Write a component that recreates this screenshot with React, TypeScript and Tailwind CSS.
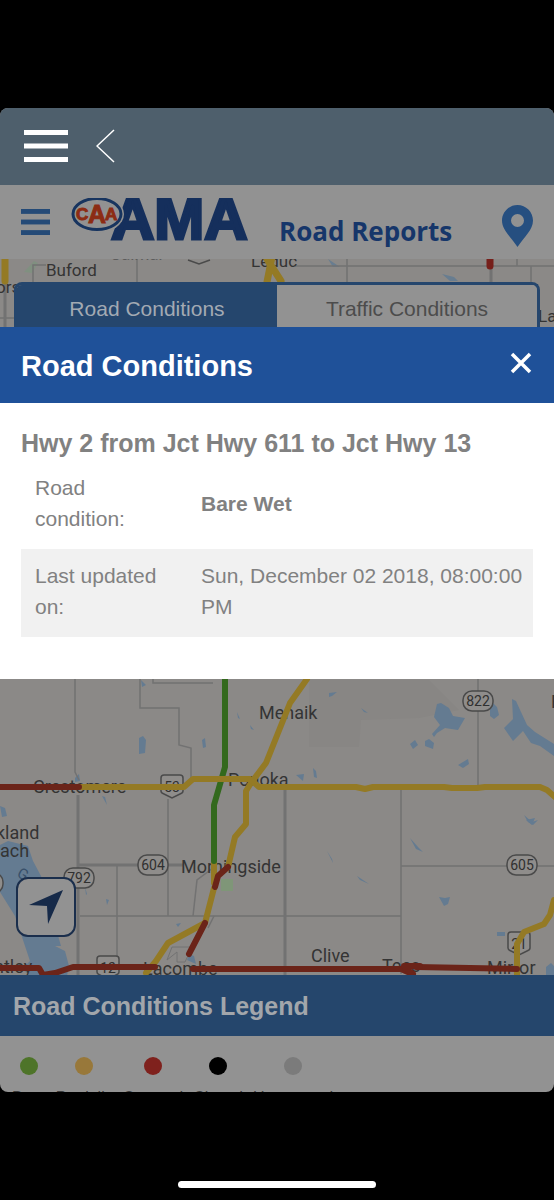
import { ReactNode } from "react";

type LegendItem = { label: string; color: string };

const legend: LegendItem[] = [
  { label: "Bare", color: "bg-[#4e7429]" },
  { label: "Partially", color: "bg-[#98783a]" },
  { label: "Covered", color: "bg-[#7f211d]" },
  { label: "Closed", color: "bg-black" },
  { label: "Unreported", color: "bg-[#7b7b7b]" },
];

function Bars({ className, thickness }: { className: string; thickness: number }) {
  return (
    <svg viewBox="0 0 44 32" preserveAspectRatio="none" className={className} fill="currentColor" aria-hidden="true">
      <rect width="44" height={thickness} />
      <rect y={16 - thickness / 2} width="44" height={thickness} />
      <rect y={32 - thickness} width="44" height={thickness} />
    </svg>
  );
}

function Logo() {
  return (
    <svg viewBox="0 0 184 48" className="h-12 w-[184px] shrink-0" role="img" aria-label="CAA AMA">
      <text
        x="40"
        y="41"
        fontFamily="Liberation Sans, Arial, sans-serif"
        fontWeight="700"
        fontSize="60"
        fill="#152f5c"
        stroke="#152f5c"
        strokeWidth="3"
      >
        AMA
      </text>
      <ellipse cx="26" cy="16" rx="27" ry="19" fill="#929292" />
      <ellipse cx="26" cy="16" rx="24" ry="15.500" fill="#929292" stroke="#17345f" strokeWidth="3" />
      <g fontFamily="Liberation Sans, Arial, sans-serif" fontWeight="700" fill="#8c2c14" stroke="#8c2c14" strokeWidth="1">
        <text x="5" y="22" fontSize="17">C</text>
        <text x="17" y="25" fontSize="25">A</text>
        <text x="34" y="22" fontSize="17">A</text>
      </g>
    </svg>
  );
}

// Oval secondary highway marker
function Oval({ x, y, children }: { x: number; y: number; children: ReactNode }) {
  return (
    <g>
      <rect x={x - 15} y={y - 10} width="30" height="20" rx="9" fill="#8f8d8b" stroke="#4a4a4a" strokeWidth="1.500" />
      <text x={x} y={y + 5} fontSize="14" textAnchor="middle" fill="#303030">{children}</text>
    </g>
  );
}

// Primary highway marker
function Shield({ x, y, children }: { x: number; y: number; children: ReactNode }) {
  return (
    <g>
      <path
        d={`M${x - 11} ${y - 8}q0-3 3-3h16q3 0 3 3v13q0 2-3 3l-8 4-8-4q-3-1-3-3z`}
        fill="#8f8d8b"
        stroke="#4a4a4a"
        strokeWidth="1.500"
      />
      <text x={x} y={y + 6} fontSize="14" textAnchor="middle" fill="#303030">{children}</text>
    </g>
  );
}

function RoadMap() {
  return (
    <svg
      viewBox="0 259 554 716"
      preserveAspectRatio="xMidYMin slice"
      className="absolute inset-0 h-full w-full"
      fontFamily="Roboto, sans-serif"
      role="img"
      aria-label="Map of road conditions"
    >
      <rect y="259" width="554" height="716" fill="#8b8987" />
      <path d="M309 680h120l30 30-40 8-58 2-2 27h-50z" fill="#888684" />
      <path d="M221 879h12v12h-12z" fill="#7f9678" />

      {/* Lakes */}
      <g fill="#647b91">
        <path d="M0 845l8-4 20 5 5 15 8 15 20 70-6 0 10 5 4 15-3 15-8 12H45l-8-12-15-12 8-8-15-45L0 892z" />
        <path d="M139 738l4-2 3 4-1 13-6 1zM0 806l5 2 2 8-5 1zM75 778l4-4 1 7-5 1zM102 796l3 1 2 8zM202 740l3-2 1 9-3 1zM141 680l5 5-4 2z" />
        <path d="M329 693l8-1-5 4-3 1zM361 708l7 5-4-1zM296 775l8-1-1 7zM313 768l3 3 1 7-3-1zM237 712l3 7-2-1zM250 725l4 5-3-1z" />
        <path d="M437 704l4-1 8 5 4 8 12 2-7 12-13-2-8 5-3 4-2-3 8-9-6-8zM490 710l2-8 5 5 2 8-5 4-4-3z" />
        <path d="M512 699l4 2 5 11 6 13 8 7 19 12v12l-14-10-9-3-8-12-10 10-9-13 9-9zM410 744l5-4 3 5-5 4zM425 741l4-2 5 4-1 6-8-3zM458 765l10-6 1 5-6 4zM524 815l8 7 6-2-5 5-5-3z" />
        <path d="M410 838l8 9 5 5-7-3zM439 897l6 1 5-1-2 7-4 2zM497 932h8v4h-8zM546 967l5-4 3 3v9h-8zM526 820l9-2-3 7zM327 851l5 8 1 4zM357 876l12 8-9-4zM85 887l2 7-1 1zM106 899l3 1-2 5zM176 924l5-1-3 4zM189 954l5 2 2 8-9-4z" />
      </g>
      <path d="M24 272l10-11 4 2-6 10z" fill="#809080" />
      <path d="M328 259l12 8h-7zM351 271l7 7zM442 274l12 3 4 4h-8z" fill="#687d90" />

      {/* Local roads */}
      <g fill="none" stroke="#727272" strokeWidth="1.500">
        <path d="M75 679v93l4 8M140 679v29h39v37l12 3v31M153 679v4h60M168 799v117M80 916h321M117 865v108M33 282v-17h13M137 259v23M347 259v23M295 266h259M517 259v7M531 266v16M0 318h14" />
        <path d="M478 679v107M401 790v184M401 866h153M193 916l4-36 20-15M208 928l6-12" />
        <path d="M78 795v180M78 865h62M168 865h15M285 790v185" strokeWidth="3" />
        <path d="M5 281v46M491 267v15" strokeWidth="3" />
        <path d="M167 960l10-8v10h8l7-15h-20z" strokeWidth="1" />
      </g>

      {/* Town names */}
      <g fill="#343434" fontSize="18">
        <text x="46" y="276" fontSize="17">Buford</text>
        <text x="110" y="260" fontSize="17" fill="#5c5c5c">Calmar</text>
        <text x="251" y="267" fontSize="17">Leduc</text>
        <text x="-4" y="293" fontSize="17">ors</text>
        <text x="538" y="322" fontSize="17">La</text>
        <text x="259" y="719">Menaik</text>
        <text x="228" y="786">Ponoka</text>
        <text x="33" y="793">Crestomere</text>
        <text x="-4" y="839">kland</text>
        <text x="0" y="857">ach</text>
        <text x="181" y="873">Morningside</text>
        <text x="311" y="962">Clive</text>
        <text x="382" y="972">Tees</text>
        <text x="487" y="974">Mirror</text>
        <text x="143" y="975">Lacombe</text>
        <text x="-6" y="973">ntley</text>
        <text x="551" y="708">R</text>
        <text x="16" y="876" fontSize="15" fill="#38506a" transform="rotate(30 16 876)">G</text>
        <text x="-1" y="676" fontSize="17">g</text>
      </g>

      <path d="M188 260l11 4 11-4" fill="none" stroke="#4a4a4a" strokeWidth="1.500" />
      <Oval x={478} y={701}>822</Oval>
      <Oval x={153} y={865}>604</Oval>
      <Oval x={522} y={865}>605</Oval>
      <Oval x={79} y={878}>792</Oval>
      <rect x="-27" y="873" width="30" height="20" rx="9" fill="#8f8d8b" stroke="#4a4a4a" strokeWidth="1.500" />
      <Shield x={172} y={786}>53</Shield>
      <Shield x={108} y={967}>12</Shield>
      <Shield x={519} y={943}>21</Shield>

      {/* Reported conditions */}
      <g fill="none" strokeWidth="6" strokeLinecap="round" strokeLinejoin="round">
        <path d="M214 863v20" stroke="#947a25" />
        <path d="M225 679v88l-11 38v56" stroke="#33691d" />
        <g stroke="#947a25">
          <path d="M307 679l-17 24-24 60-15 20-5 8v33l-11 13-7 30M214 888l-9 35-37 20-12 18-10 12" />
          <path d="M80 787h104l9-8h57l9 8h97l9 2 8-2h71l8 1h25l8-1h55l7 3 8 7M554 900l-4 15-6 9-20 8-7 12v31" />
          <path d="M5 257v24M272 257l-5 25M267 259l14 22" strokeWidth="7" />
        </g>
        <g stroke="#6b2419">
          <path d="M0 787h79M228 867l-10 9-3 11M205 923l-16 31" />
          <path d="M0 968h39l4 7M43 975l12-2 18-6h82M193 969h208l9 4M416 967l101 2" />
          <path d="M404 966h16M405 968l8 6" />
        </g>
        <path d="M490 257v9" stroke="#761f1a" strokeWidth="7" />
      </g>
    </svg>
  );
}

function ConditionsPanel() {
  return (
    <section className="bg-white text-[#818181]" role="dialog" aria-labelledby="panel-title">
      <div className="flex h-[76px] items-center justify-between bg-[#1f5199] px-[21px] text-white">
        <h2 id="panel-title" className="pt-1 text-[29px] font-bold">Road Conditions</h2>
        <button type="button" aria-label="Close" className="mb-1">
          <svg viewBox="0 0 24 24" className="h-6 w-6" fill="none" stroke="currentColor" strokeWidth="3.500">
            <path d="M3 3l18 18M21 3L3 21" />
          </svg>
        </button>
      </div>
      <div className="px-[21px] pt-[22px] pb-[42px]">
        <h3 className="text-[25px] leading-9 font-bold">Hwy 2 from Jct Hwy 611 to Jct Hwy 13</h3>
        <table className="w-full text-left text-[21px] leading-[31px]">
          <tbody>
            <tr>
              <th scope="row" className="w-[166px] px-[14px] pt-[11px] pb-[15px] font-normal">Road condition:</th>
              <td className="pt-[11px] pb-[15px] pl-[14px] font-bold">Bare Wet</td>
            </tr>
            <tr className="bg-[#f1f1f1]">
              <th scope="row" className="px-[14px] pt-[11px] pb-[15px] font-normal">Last updated on:</th>
              <td className="pt-[11px] pb-[15px] pl-[14px]">Sun, December 02 2018, 08:00:00 PM</td>
            </tr>
          </tbody>
        </table>
      </div>
    </section>
  );
}

export default function App() {
  return (
    <div className="flex min-h-screen flex-col bg-black pt-[108px] font-['Liberation_Sans',Arial,sans-serif]">
      <div className="flex flex-1 flex-col overflow-hidden rounded-lg bg-[#929292]">
        <nav className="flex h-[77px] items-center gap-7 bg-[#4e5f6c] px-6 pb-0.5 text-white">
          <button type="button" aria-label="App menu">
            <Bars className="h-8 w-11" thickness={5} />
          </button>
          <button type="button" aria-label="Back">
            <svg viewBox="0 0 20 34" className="h-[34px] w-5" fill="none" stroke="currentColor" strokeWidth="1.500">
              <path d="M18 1L1 17l17 16" />
            </svg>
          </button>
        </nav>

        <header className="flex h-[74px] items-center px-[21px]">
          <button type="button" aria-label="Menu" className="text-[#244a77]">
            <Bars className="h-[26px] w-[29px]" thickness={6} />
          </button>
          <div className="ml-[21px]">
            <Logo />
          </div>
          <h1 className="ml-6 self-end pb-2 font-['Open_Sans',sans-serif] text-[26px] font-bold whitespace-nowrap text-[#16366a]">
            Road Reports
          </h1>
          <button type="button" aria-label="My location" className="mt-2 ml-auto">
            <svg viewBox="0 0 31 42" className="h-[42px] w-[31px]" fill="#264f80" fillRule="evenodd">
              <path d="M15.500 0C7 0 0 7 0 15.500 0 25 9 32 15.500 42 22 32 31 25 31 15.500 31 7 24 0 15.500 0zm0 9a6.500 6.500 0 110 13 6.500 6.500 0 010-13z" />
            </svg>
          </button>
        </header>

        <main className="relative flex min-h-[716px] flex-1 flex-col">
          <RoadMap />
          <div className="relative mx-[14px] mt-[23px] grid h-[45px] grid-cols-2 overflow-hidden rounded-t-lg border-3 border-b-0 border-[#25466d] text-[21px]">
            <button type="button" className="bg-[#25466d] pt-1.5 text-[#a3aab3]">Road Conditions</button>
            <button type="button" className="bg-[#929292] pt-1.5 text-[#4c4c4c]">Traffic Conditions</button>
          </div>
          <div className="relative">
            <ConditionsPanel />
          </div>
          <button
            type="button"
            aria-label="Find me"
            className="relative mt-auto mb-[38px] ml-4 flex h-[60px] w-[60px] items-center justify-center rounded-xl border-2 border-[#1a2e4c] bg-[#929292]"
          >
            <svg viewBox="0 0 34 34" className="h-[34px] w-[34px]" fill="#162a49">
              <path d="M34 0L19 34l-1-18L0 15z" />
            </svg>
          </button>
        </main>

        <footer>
          <h2 className="flex h-[61px] items-center bg-[#25466c] px-[13px] pt-0.5 text-[25px] font-bold text-[#a2a6ab]">
            Road Conditions Legend
          </h2>
          <ul className="flex h-14 gap-[10px] overflow-hidden px-3 pt-[21px] text-[#3c3c3c]">
            {legend.map((item) => (
              <li key={item.label} className="flex flex-col items-center gap-[11px]">
                <span className={`h-[18px] w-[18px] shrink-0 rounded-full ${item.color}`} />
                {item.label}
              </li>
            ))}
          </ul>
        </footer>
      </div>
      <div className="flex h-[108px] items-end justify-center pb-3">
        <div className="h-[7px] w-[198px] rounded-full bg-white" />
      </div>
    </div>
  );
}
